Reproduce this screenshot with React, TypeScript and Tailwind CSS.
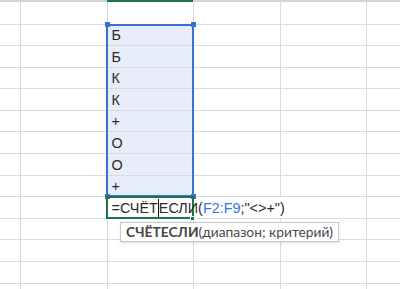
import React from 'react';

const values = ['Б', 'Б', 'К', 'К', '+', 'О', 'О', '+'];
const rowCount = 14;

function Row({ index }: { index: number }) {
  const first = index === 0;
  const inRange = index >= 1 && index <= 8;
  const formulaRow = index === 9;
  return (
    <div className={`flex ${first ? 'h-[22.5px]' : 'h-[21.6px]'} shrink-0`}>
      <div className="w-[21px] shrink-0 border-r border-b border-[#dadada]" />
      <div className="w-[86.5px] shrink-0 border-r border-b border-[#dadada]" />
      <div
        className={`w-[86.5px] shrink-0 border-r border-b border-[#dadada] flex items-end pl-[4px] pb-[1px] text-[14.4px] leading-[18px] text-[#2a2a2a] ${
          inRange ? 'bg-[#e8eef9]' : ''
        }`}
      >
        {inRange && values[index - 1]}
        {formulaRow && (
          <span className="relative z-10 whitespace-nowrap">
            =СЧЁТ
            <span className="inline-block w-[1px] h-[18px] bg-[#111] align-[-4px]" />
            ЕСЛИ(<span className="text-[#3a78d8]">F2:F9</span>;"&lt;&gt;+")
          </span>
        )}
      </div>
      <div className={`w-[86.5px] shrink-0 border-b border-[#dadada] ${formulaRow ? '' : 'border-r'}`} />
      <div className="w-[86.5px] shrink-0 border-r border-b border-[#dadada]" />
      <div className="w-[40px] shrink-0 border-b border-[#dadada]" />
    </div>
  );
}

export default function App() {
  return (
    <div className="relative w-[400px] h-[289px] overflow-hidden bg-white font-['Liberation_Sans',Arial,sans-serif]">
      {/* column header edge */}
      <div className="flex h-[2px]">
        <div className="w-[106.5px] bg-[#d4d4d4]" />
        <div className="w-[86.5px] bg-[#217346]" />
        <div className="flex-1 bg-[#d4d4d4]" />
      </div>

      {Array.from({ length: rowCount }).map((_, i) => (
        <Row key={i} index={i} />
      ))}

      {/* range highlight F2:F9 */}
      <div className="absolute left-[106px] top-[23.5px] w-[88px] h-[173px] border-2 border-[#3a6fd3] pointer-events-none" />
      <div className="absolute left-[104.5px] top-[22px] w-[5px] h-[5px] bg-[#3a6fd3]" />
      <div className="absolute left-[191px] top-[22px] w-[5px] h-[5px] bg-[#3a6fd3]" />
      <div className="absolute left-[104.5px] top-[193.5px] w-[5px] h-[5px] bg-[#3a6fd3]" />
      <div className="absolute left-[191px] top-[193.5px] w-[5px] h-[5px] bg-[#3a6fd3]" />

      {/* active cell */}
      <div className="absolute left-[105.5px] top-[195.5px] w-[88.5px] h-[23.5px] border-2 border-[#217346] pointer-events-none" />
      <div className="absolute left-[190px] top-[216px] w-[5px] h-[5px] bg-[#217346] border border-white" />

      {/* function tooltip */}
      <div className="absolute left-[120px] right-[61px] top-[222px] h-[20px] bg-white border border-[#c8c8c8] shadow-sm flex items-center pl-[5px] text-[13.8px] text-[#4a4a4a] font-['Lato',sans-serif] whitespace-nowrap">
        <span className="font-bold text-[#444]">СЧЁТЕСЛИ</span>(диапазон; критерий)
      </div>
    </div>
  );
}
